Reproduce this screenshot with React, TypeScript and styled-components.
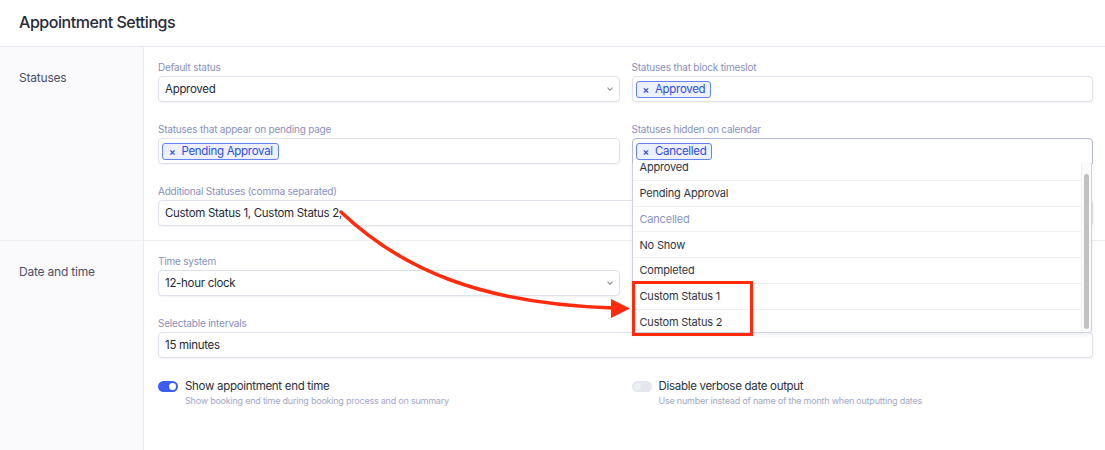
import React, { useLayoutEffect, useRef } from "react";
import styled, { createGlobalStyle } from "styled-components";

const Global = createGlobalStyle`
  html, body { margin: 0; padding: 0; background: #ffffff; }
  body { font-family: Inter, "Noto Sans", "Liberation Sans", sans-serif; -webkit-font-smoothing: antialiased; }
  * { box-sizing: border-box; }
`;

const Page = styled.div`
  position: relative;
  width: 1105px;
  height: 450px;
  overflow: hidden;
  background: #fff;
`;

const Header = styled.header`
  height: 47px;
  display: flex;
  align-items: center;
  padding: 0 19px 2px;
  border-bottom: 1px solid #e7e9f0;
`;

const Title = styled.h1`
  margin: 0;
  font-size: 16px;
  font-weight: 500;
  color: #262a35;
  letter-spacing: -0.45px;
`;

const Section = styled.section<{ $last?: boolean }>`
  display: grid;
  grid-template-columns: 144px 1fr;
  border-bottom: ${(p) => (p.$last ? "none" : "1px solid #eceef4")};
  min-height: ${(p) => (p.$last ? "212px" : "auto")};
`;

const Side = styled.div`
  background: #fafafd;
  border-right: 1px solid #eaecf3;
  padding: 23px 19px;
`;

const SideLabel = styled.div`
  font-size: 12px;
  line-height: 16px;
  letter-spacing: -0.2px;
  color: #4a4f66;
`;

const Content = styled.div`
  padding: 14px 12px 14px 14px;
`;

const FieldGrid = styled.div`
  display: grid;
  grid-template-columns: 1fr 1fr;
  column-gap: 12px;
  row-gap: 21px;
`;

const Field = styled.div<{ $wide?: boolean; $raised?: boolean }>`
  position: relative;
  z-index: ${(p) => (p.$raised ? 5 : "auto")};
  grid-column: ${(p) => (p.$wide ? "1 / -1" : "auto")};
  display: flex;
  flex-direction: column;
  gap: 2px;
`;

const Label = styled.label`
  font-size: 10px;
  line-height: 13px;
  letter-spacing: -0.2px;
  color: #8890bb;
`;

const Box = styled.div<{ $focus?: boolean }>`
  position: relative;
  height: 26px;
  display: flex;
  align-items: center;
  gap: 4px;
  padding: 0 6px;
  border: 1px solid ${(p) => (p.$focus ? "#b3b8ce" : "#dfe2ea")};
  border-radius: ${(p) => (p.$focus ? "4px 4px 0 0" : "4px")};
  box-shadow: 0 1px 2px rgba(30, 40, 80, 0.06);
  background: #fff;
  font-size: 11.5px;
  letter-spacing: -0.3px;
  color: #262a35;
`;

const TagBox = styled(Box)`
  padding: 0 3px;
`;

const ChevronWrap = styled.span`
  margin-left: auto;
  display: flex;
  align-items: center;
`;

const Chevron = () => (
  <ChevronWrap>
    <svg width="6" height="4" viewBox="0 0 6 4">
      <path d="M0.5 0.7 L3 3.2 L5.5 0.7" fill="none" stroke="#8a8f9c" strokeWidth="1.1" />
    </svg>
  </ChevronWrap>
);

const Tag = styled.span`
  display: inline-flex;
  align-items: center;
  gap: 6px;
  height: 17px;
  padding: 0 5px 0 6px;
  border: 1px solid #6582f4;
  border-radius: 3px;
  background: #edf1ff;
  color: #2f4de0;
  font-size: 11.5px;
  letter-spacing: -0.3px;
`;

const TagX = styled.span`
  font-size: 10px;
  font-weight: 600;
  line-height: 1;
`;

const Dropdown = styled.div`
  position: absolute;
  z-index: 5;
  top: 100%;
  left: -1px;
  right: 0;
  height: 170px;
  display: flex;
  background: #fff;
  border: 1px solid #cfd2de;
  border-top: none;
  border-radius: 0 0 4px 4px;
  box-shadow: 0 2px 4px rgba(30, 40, 80, 0.08);
  overflow: hidden;
`;

const OptionList = styled.ul`
  flex: 1;
  margin: 0;
  padding: 0;
  list-style: none;
  overflow: hidden;
`;

const ScrollTrack = styled.div`
  flex: none;
  width: 10px;
  display: flex;
  padding: 11px 2px 3px;
  background: #fbfbfb;
  border-left: 1px solid #efefef;
`;

const ScrollThumb = styled.div`
  flex: 1;
  border-radius: 3px;
  background: #c1c1c1;
`;

const Option = styled.li<{ $selected?: boolean }>`
  height: 25.75px;
  display: flex;
  align-items: center;
  padding: 0 7px;
  font-size: 11px;
  letter-spacing: -0.2px;
  color: ${(p) => (p.$selected ? "#8b93c4" : "#2f333f")};
  border-bottom: 1px solid #eef0f4;
  &:last-child { border-bottom: none; }
`;

const ToggleRow = styled.div`
  display: flex;
  gap: 7px;
  align-items: flex-start;
`;

const Switch = styled.span<{ $on?: boolean }>`
  flex: none;
  margin-top: 2px;
  width: 20px;
  height: 11px;
  border-radius: 6px;
  background: ${(p) => (p.$on ? "#3d5cf2" : "#e3e6ef")};
  display: flex;
  align-items: center;
  justify-content: ${(p) => (p.$on ? "flex-end" : "flex-start")};
  padding: 0 2px;
  &::after {
    content: "";
    width: 7px;
    height: 7px;
    border-radius: 50%;
    background: ${(p) => (p.$on ? "#ffffff" : "#eef0f5")};
  }
`;

const ToggleText = styled.div`
  display: flex;
  flex-direction: column;
  gap: 2px;
`;

const ToggleTitle = styled.div`
  font-size: 11.5px;
  line-height: 14px;
  letter-spacing: -0.3px;
  color: #2b2f3a;
`;

const ToggleDesc = styled.div`
  font-size: 9px;
  line-height: 12px;
  letter-spacing: -0.22px;
  color: #a2a8c8;
`;

const Highlight = styled.div`
  position: absolute;
  z-index: 10;
  left: 632px;
  top: 281px;
  width: 121px;
  height: 55px;
  border: 3px solid #ff2b0b;
  pointer-events: none;
`;

const ArrowLayer = styled.svg`
  position: absolute;
  z-index: 11;
  left: 0;
  top: 0;
  pointer-events: none;
`;

const options = [
  "Approved",
  "Pending Approval",
  "Cancelled",
  "No Show",
  "Completed",
  "Custom Status 1",
  "Custom Status 2",
];

export default function App() {
  const listRef = useRef<HTMLUListElement>(null);
  useLayoutEffect(() => {
    if (listRef.current) listRef.current.scrollTop = 8;
  }, []);

  return (
    <Page>
      <Global />
      <Header>
        <Title>Appointment Settings</Title>
      </Header>

      <Section>
        <Side>
          <SideLabel>Statuses</SideLabel>
        </Side>
        <Content>
          <FieldGrid>
            <Field>
              <Label>Default status</Label>
              <Box>
                Approved
                <Chevron />
              </Box>
            </Field>
            <Field>
              <Label>Statuses that block timeslot</Label>
              <TagBox>
                <Tag>
                  <TagX>×</TagX>Approved
                </Tag>
              </TagBox>
            </Field>
            <Field>
              <Label>Statuses that appear on pending page</Label>
              <TagBox>
                <Tag>
                  <TagX>×</TagX>Pending Approval
                </Tag>
              </TagBox>
            </Field>
            <Field $raised>
              <Label>Statuses hidden on calendar</Label>
              <TagBox $focus>
                <Tag>
                  <TagX>×</TagX>Cancelled
                </Tag>
                <Dropdown>
                  <OptionList ref={listRef}>
                    {options.map((o) => (
                      <Option key={o} $selected={o === "Cancelled"}>
                        {o}
                      </Option>
                    ))}
                  </OptionList>
                  <ScrollTrack>
                    <ScrollThumb />
                  </ScrollTrack>
                </Dropdown>
              </TagBox>
            </Field>
            <Field $wide>
              <Label>Additional Statuses (comma separated)</Label>
              <Box>Custom Status 1, Custom Status 2,</Box>
            </Field>
          </FieldGrid>
        </Content>
      </Section>

      <Section $last>
        <Side>
          <SideLabel>Date and time</SideLabel>
        </Side>
        <Content>
          <FieldGrid>
            <Field>
              <Label>Time system</Label>
              <Box>
                12-hour clock
                <Chevron />
              </Box>
            </Field>
            <Field />
            <Field $wide>
              <Label>Selectable intervals</Label>
              <Box>15 minutes</Box>
            </Field>
            <ToggleRow>
              <Switch $on />
              <ToggleText>
                <ToggleTitle>Show appointment end time</ToggleTitle>
                <ToggleDesc>Show booking end time during booking process and on summary</ToggleDesc>
              </ToggleText>
            </ToggleRow>
            <ToggleRow>
              <Switch />
              <ToggleText>
                <ToggleTitle>Disable verbose date output</ToggleTitle>
                <ToggleDesc>Use number instead of name of the month when outputting dates</ToggleDesc>
              </ToggleText>
            </ToggleRow>
          </FieldGrid>
        </Content>
      </Section>

      <Highlight />
      <ArrowLayer width="1105" height="450" viewBox="0 0 1105 450">
        <path
          d="M341 212 C 400 268, 480 304, 613 308"
          fill="none"
          stroke="#ff2b0b"
          strokeWidth="3.5"
          strokeLinecap="round"
        />
        <polygon points="611,299 630,308.5 611,318" fill="#ff2b0b" />
      </ArrowLayer>
    </Page>
  );
}
